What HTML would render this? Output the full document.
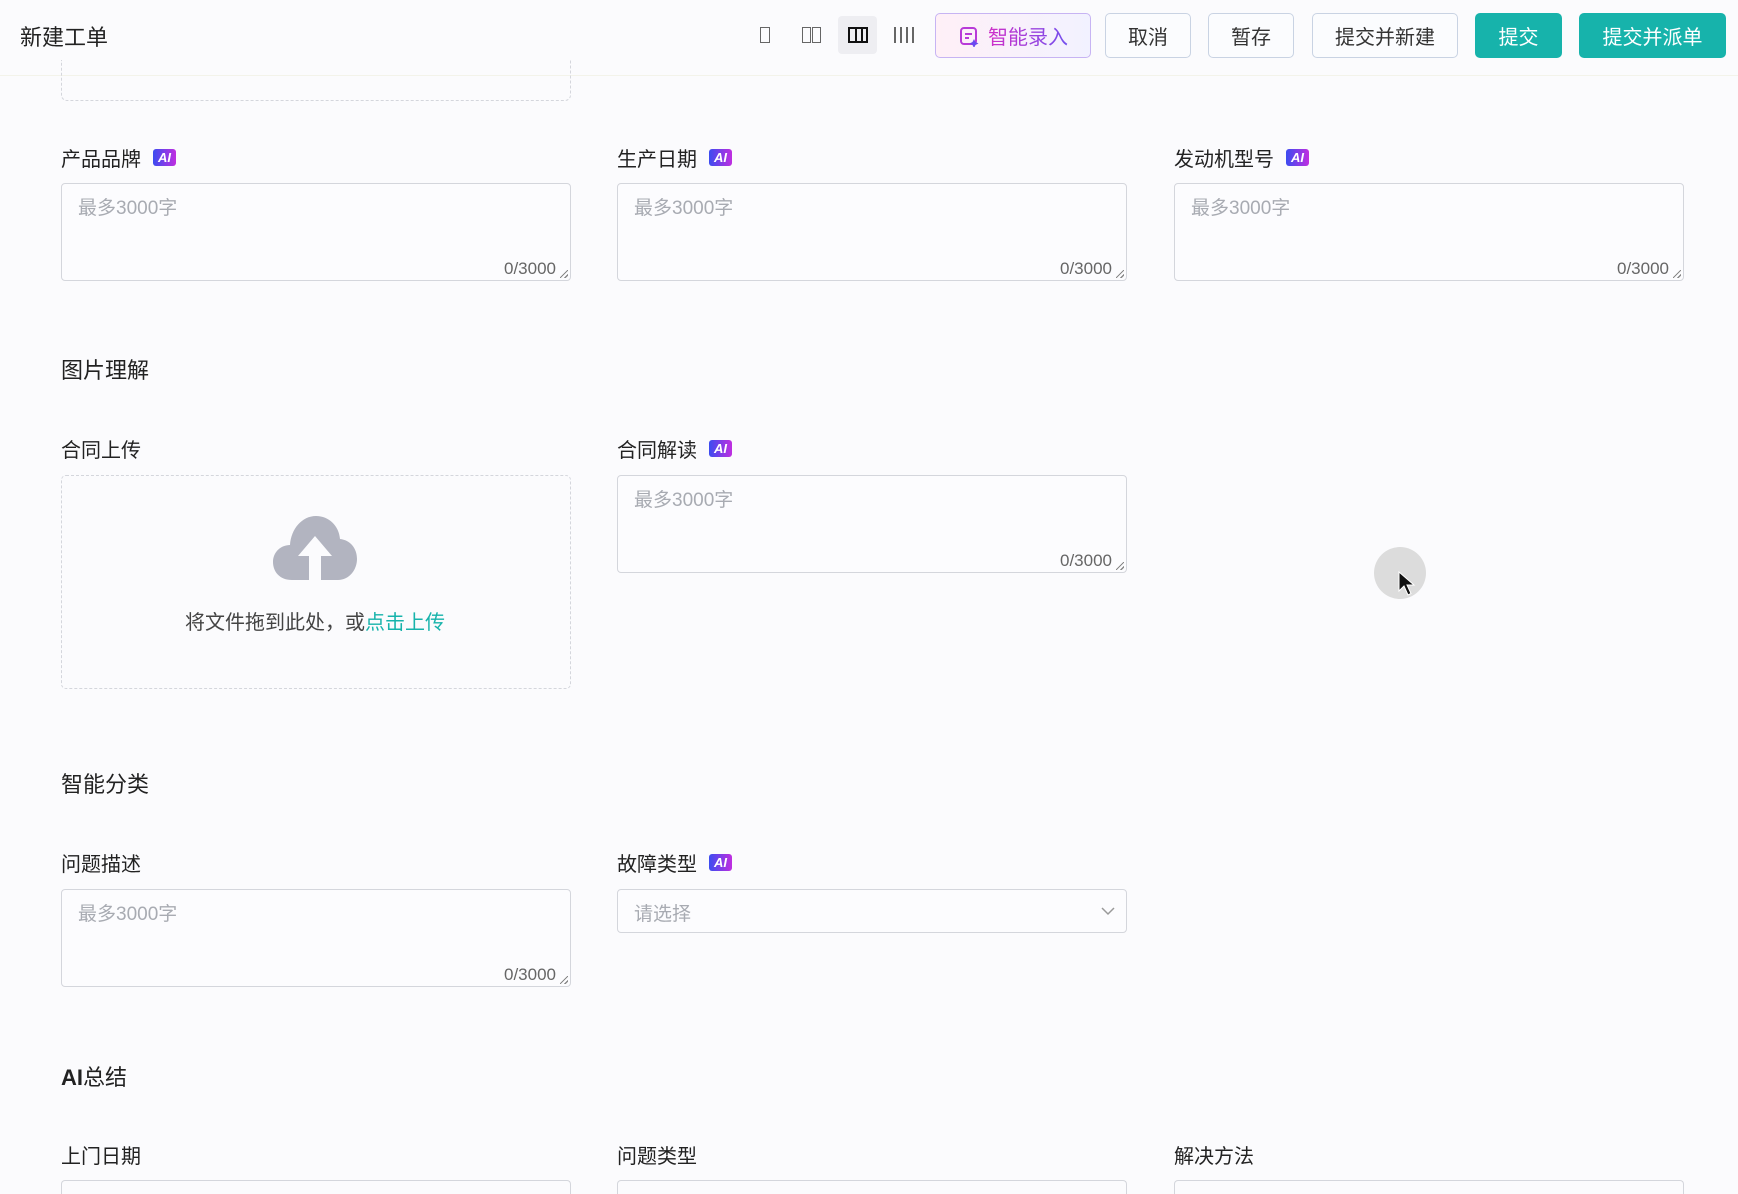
<!DOCTYPE html>
<html style="overflow:hidden;height:1194px"><head><meta charset="utf-8"><style>
*{box-sizing:border-box;margin:0;padding:0}
body{width:1738px;height:1194px;overflow:hidden;background:#fbfbfd;font-family:"Liberation Sans","Noto Sans CJK SC",sans-serif;color:#222;position:relative}
.a{position:absolute}
.hdr{left:0;top:0;width:1738px;height:76px;background:#fbfbfd;border-bottom:1px solid #f3f3ea}
.title{left:20px;top:20px;font-size:22px;color:#222}
.btn{top:13px;height:45px;border:1px solid #c9d3e3;border-radius:5px;background:#fbfcfe;font-size:20px;color:#333;display:flex;align-items:center;justify-content:center}
.pri{background:#17b3ab;border-color:#17b3ab;color:#fff}
.lbl{font-size:20px;color:#222;display:flex;align-items:center}
.ai{display:inline-block;width:23px;height:17px;border-radius:3px;background:linear-gradient(90deg,#3b4cf0,#c02ee0);color:#fff;font-size:13px;font-weight:bold;font-style:italic;text-align:center;line-height:17px;margin-left:12px}
.ta{width:510px;height:98px;border:1px solid #d4d6dc;border-radius:4px;background:#fcfcfe}
.ph{position:absolute;left:16px;top:9px;font-size:19px;color:#a8abb2}
.cnt{position:absolute;right:14px;bottom:1px;font-size:17px;color:#666}
.rz{position:absolute;right:2px;bottom:2px;width:8px;height:8px;background:linear-gradient(135deg,transparent 45%,#888 45%,#888 55%,transparent 55%,transparent 75%,#888 75%,#888 85%,transparent 85%)}
.sec{font-size:22px;color:#222}
.c1{left:61px}.c2{left:617px}.c3{left:1174px}
.bi{top:1180px;width:510px;height:14px;border:1px solid #d4d6dc;border-bottom:none;border-radius:4px 4px 0 0}
</style></head><body>
<div class="a hdr"></div>
<div class="a title">新建工单</div>
<div class="a" style="left:760px;top:27px;width:10px;height:16px;border:1.5px solid #666"></div>
<div class="a" style="left:802px;top:27px;width:9px;height:16px;border:1.5px solid #666"></div>
<div class="a" style="left:812px;top:27px;width:9px;height:16px;border:1.5px solid #666"></div>
<div class="a" style="left:838px;top:16px;width:39px;height:38px;background:#eeeef2;border-radius:4px"></div>
<div class="a" style="left:848px;top:27px;width:20px;height:16px;border:2px solid #111;background:linear-gradient(90deg,transparent 5px,#111 5px,#111 7px,transparent 7px,transparent 11px,#111 11px,#111 13px,transparent 13px)"></div>
<div class="a" style="left:894px;top:27px;width:20px;height:16px;background:repeating-linear-gradient(90deg,#666 0 2px,transparent 2px 6px)"></div>
<div class="a btn" style="left:935px;width:156px;border-color:#c7b4f3;background:linear-gradient(90deg,#fff0f7,#f2f2ff);color:#c233d6"><svg width="22" height="22" viewBox="0 0 22 22" style="margin-right:8px"><rect x="3" y="3" width="15" height="16" rx="3" fill="none" stroke="#b83ad8" stroke-width="2"/><path d="M7 9h7M7 13h4" stroke="#b83ad8" stroke-width="2"/><path d="M16 14l1.5 3 3 1.5-3 1.5-1.5 3-1.5-3-3-1.5 3-1.5z" fill="#6a4af0"/></svg><span style="background:linear-gradient(90deg,#d02fc8,#7250ee);-webkit-background-clip:text;color:transparent">智能录入</span></div>
<div class="a btn" style="left:1105px;width:86px">取消</div>
<div class="a btn" style="left:1208px;width:86px">暂存</div>
<div class="a btn" style="left:1312px;width:146px">提交并新建</div>
<div class="a btn pri" style="left:1475px;width:87px">提交</div>
<div class="a btn pri" style="left:1579px;width:147px">提交并派单</div>

<div class="a" style="left:61px;top:60px;width:510px;height:41px;border:1.5px dashed #d4d6dc;border-top:none;border-radius:0 0 6px 6px"></div>

<div class="a lbl c1" style="top:143px">产品品牌<span class="ai">AI</span></div>
<div class="a lbl c2" style="top:143px">生产日期<span class="ai">AI</span></div>
<div class="a lbl c3" style="top:143px">发动机型号<span class="ai">AI</span></div>
<div class="a ta c1" style="top:183px"><span class="ph">最多3000字</span><span class="cnt">0/3000</span><span class="rz"></span></div>
<div class="a ta c2" style="top:183px"><span class="ph">最多3000字</span><span class="cnt">0/3000</span><span class="rz"></span></div>
<div class="a ta c3" style="top:183px"><span class="ph">最多3000字</span><span class="cnt">0/3000</span><span class="rz"></span></div>

<div class="a sec c1" style="top:353px">图片理解</div>
<div class="a lbl c1" style="top:434px">合同上传</div>
<div class="a lbl c2" style="top:434px">合同解读<span class="ai">AI</span></div>
<div class="a c1" style="top:475px;width:510px;height:214px;border:1.5px dashed #d4d6dc;border-radius:5px"></div>
<svg class="a" style="left:272px;top:514px" width="86" height="68" viewBox="0 0 86 68"><path d="M20 66C8 66 1 58 1 48C1 38 9 31 18 31C19 15 30 2 44 2C57 2 67 12 68 25C78 26 85 34 85 45C85 56 77 66 66 66Z" fill="#b2b4c0"/><path d="M43 22L26 42H37V68H49V42H60Z" fill="#fbfbfd"/></svg>
<div class="a" style="left:185px;top:606px;font-size:20px;color:#444">将文件拖到此处，或<span style="color:#17b3ab">点击上传</span></div>
<div class="a ta c2" style="top:475px"><span class="ph">最多3000字</span><span class="cnt">0/3000</span><span class="rz"></span></div>

<div class="a" style="left:1374px;top:547px;width:52px;height:52px;border-radius:50%;background:#dcdcdc"></div>
<svg class="a" style="left:1398px;top:571px" width="18" height="26" viewBox="0 0 18 26"><path d="M1 1V20L6 15L10 24L13 22.5L9 14H16Z" fill="#111" stroke="#fff" stroke-width="1"/></svg>

<div class="a sec c1" style="top:767px">智能分类</div>
<div class="a lbl c1" style="top:848px">问题描述</div>
<div class="a lbl c2" style="top:848px">故障类型<span class="ai">AI</span></div>
<div class="a ta c1" style="top:889px"><span class="ph">最多3000字</span><span class="cnt">0/3000</span><span class="rz"></span></div>
<div class="a c2" style="top:889px;width:510px;height:44px;border:1px solid #d4d6dc;border-radius:4px;background:#fcfcfe"><span class="ph" style="top:9px">请选择</span><svg style="position:absolute;right:10px;top:16px" width="16" height="10" viewBox="0 0 16 10"><path d="M2 2L8 8L14 2" fill="none" stroke="#999" stroke-width="1.5"/></svg></div>

<div class="a sec c1" style="top:1060px;font-weight:bold">AI<span style="font-weight:normal">总结</span></div>
<div class="a lbl c1" style="top:1140px">上门日期</div>
<div class="a lbl c2" style="top:1140px">问题类型</div>
<div class="a lbl c3" style="top:1140px">解决方法</div>
<div class="a bi c1"></div>
<div class="a bi c2"></div>
<div class="a bi c3"></div>
</body></html>
